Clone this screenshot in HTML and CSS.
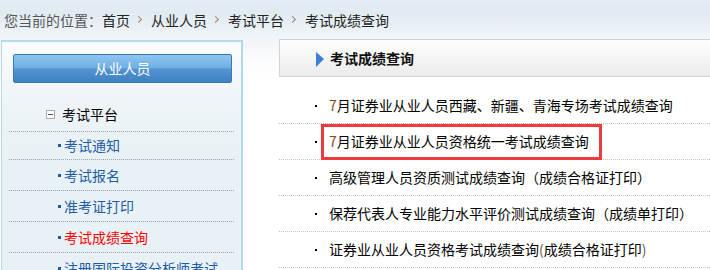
FILE: index.html
```html
<!DOCTYPE html>
<html lang="zh-CN">
<head>
    <meta charset="UTF-8">
    <title>考试成绩查询</title>
    <link rel="stylesheet" href="styles.css">
</head>
<body>
    <div class="page">
        <div class="crumb">
            <span class="crumb-label">您当前的位置：</span>
            <a href="#">首页</a>
            <span class="sep"></span>
            <a href="#">从业人员</a>
            <span class="sep"></span>
            <a href="#">考试平台</a>
            <span class="sep"></span>
            <a href="#">考试成绩查询</a>
        </div>

        <div class="main">
            <!-- left menu -->
            <div class="side">
                <div class="side-btn">从业人员</div>
                <ul class="tree">
                    <li class="tree-title"><span class="fold"></span>考试平台</li>
                    <li class="first"><a href="#">考试通知</a></li>
                    <li><a href="#">考试报名</a></li>
                    <li><a href="#">准考证打印</a></li>
                    <li class="current"><a href="#">考试成绩查询</a></li>
                    <li><a href="#">注册国际投资分析师考试</a></li>
                </ul>
            </div>

            <!-- right list -->
            <div class="content">
                <div class="content-head"><span class="arrow"></span>考试成绩查询</div>
                <ul class="news">
                    <li><a href="#"><span class="num">7</span>月证券业从业人员西藏、新疆、青海专场考试成绩查询</a></li>
                    <li class="marked"><a href="#"><span class="num">7</span>月证券业从业人员资格统一考试成绩查询</a></li>
                    <li><a href="#">高级管理人员资质测试成绩查询（成绩合格证打印）</a></li>
                    <li><a href="#">保荐代表人专业能力水平评价测试成绩查询（成绩单打印）</a></li>
                    <li><a href="#">证券业从业人员资格考试成绩查询<span class="paren">(</span>成绩合格证打印<span class="paren">)</span></a></li>
                </ul>
            </div>
        </div>
    </div>
</body>
</html>
```

FILE: styles.css
```css
/* Base */
body {
    margin: 0;
    font-family: 'Noto Sans CJK SC', 'DejaVu Sans', sans-serif;
    font-size: 14px;
    color: #222;
    background: #fff linear-gradient(#e6eef5 0, #e0eaf1 12px, #f1f5f8 38px, #fbfcfd 60px, #fff 78px) no-repeat;
    background-size: 100% 80px;
}

a {
    color: inherit;
    text-decoration: none;
}

ul {
    list-style: none;
    margin: 0;
    padding: 0;
}

.page {
    width: 710px;
    height: 270px;
    overflow: hidden;
}

/* Breadcrumb */
.crumb {
    height: 39px;
    line-height: 32px;
    padding-left: 4px;
    display: flex;
    align-items: center;
    white-space: nowrap;
}

.crumb-label {
    color: #555;
}

.crumb a {
    color: #222;
}

.sep {
    width: 4px;
    height: 4px;
    margin: 0 10px 0 6px;
    border-top: 1px solid #8a8a8a;
    border-right: 1px solid #b07a40;
    transform: rotate(45deg);
}

/* Layout */
.main {
    display: flex;
    align-items: flex-start;
    padding-left: 1px;
}

/* Left menu */
.side {
    box-sizing: border-box;
    width: 242px;
    height: 240px;
    margin-top: 1px;
    border: 2px solid #b3dbe7;
    border-left-width: 1px;
    border-bottom: none;
    background: linear-gradient(#fbfcfd 0, #eef4f7 60px, #e8f1f5 120px);
    padding-left: 1px;
}

.side-btn {
    height: 27px;
    margin: 12px 9px 0 10px;
    border: 1px solid #3a78b4;
    border-radius: 2px;
    background: linear-gradient(#8fc6ef 0, #6eaee4 48%, #5394d2 52%, #3f80c2 100%);
    color: #fff;
    text-align: center;
    line-height: 27px;
    font-size: 14px;
}

.tree {
    margin: 14px 7px 0 6px;
}

.tree li {
    height: 30px;
    line-height: 30px;
    border-bottom: 1px dotted #9aa4ad;
    padding-left: 49px;
    position: relative;
    color: #1d5ca6;
    white-space: nowrap;
}

.tree li:before {
    content: '';
    position: absolute;
    left: 49px;
    top: 14px;
    width: 3px;
    height: 3px;
    background: #1d5ca6;
}

.tree li a {
    margin-left: 6px;
}

.tree li.first {
    height: 27px;
    line-height: 27px;
}

.tree li.first:before {
    top: 12px;
}

.tree li.current {
    color: #f00;
}

.tree .tree-title {
    height: 34px;
    line-height: 34px;
    padding-left: 37px;
    color: #000;
    display: flex;
    align-items: center;
}

.tree .tree-title:before {
    display: none;
}

.fold {
    box-sizing: border-box;
    width: 9px;
    height: 9px;
    border: 1px solid #aaa;
    margin-right: 7px;
    position: relative;
    background: #fff;
}

.fold:after {
    content: '';
    position: absolute;
    left: 1px;
    top: 3px;
    width: 5px;
    height: 1px;
    background: #555;
}

/* Right list */
.content {
    flex: 1;
    margin-left: 36px;
}

.content-head {
    height: 36px;
    border: 1px solid #d3d3d3;
    border-right: none;
    background: linear-gradient(#fefefe, #f3f3f3 60%, #ebebeb);
    display: flex;
    align-items: center;
    padding-left: 36px;
    font-weight: bold;
    color: #111;
}

.arrow {
    width: 0;
    height: 0;
    border-top: 7px solid transparent;
    border-bottom: 8px solid transparent;
    border-left: 8px solid #3d7fd4;
    margin-right: 6px;
    margin-top: 3px;
}

.news {
    margin-top: 11px;
}

.news li {
    height: 35px;
    line-height: 35px;
    border-bottom: 1px dotted #c4c4c4;
    padding-left: 50px;
    position: relative;
    color: #000;
    white-space: nowrap;
}

.news li:before {
    content: '';
    position: absolute;
    left: 36px;
    top: 17px;
    width: 2px;
    height: 2px;
    background: #000;
}

.num {
    color: #8b4a17;
}

.paren {
    color: #6a5a3a;
}

/* red annotation frame over the second row */
.news li.marked:after {
    content: '';
    position: absolute;
    left: 42px;
    top: 0;
    width: 275px;
    height: 30px;
    border: 3px solid #ee3a3a;
}
```
